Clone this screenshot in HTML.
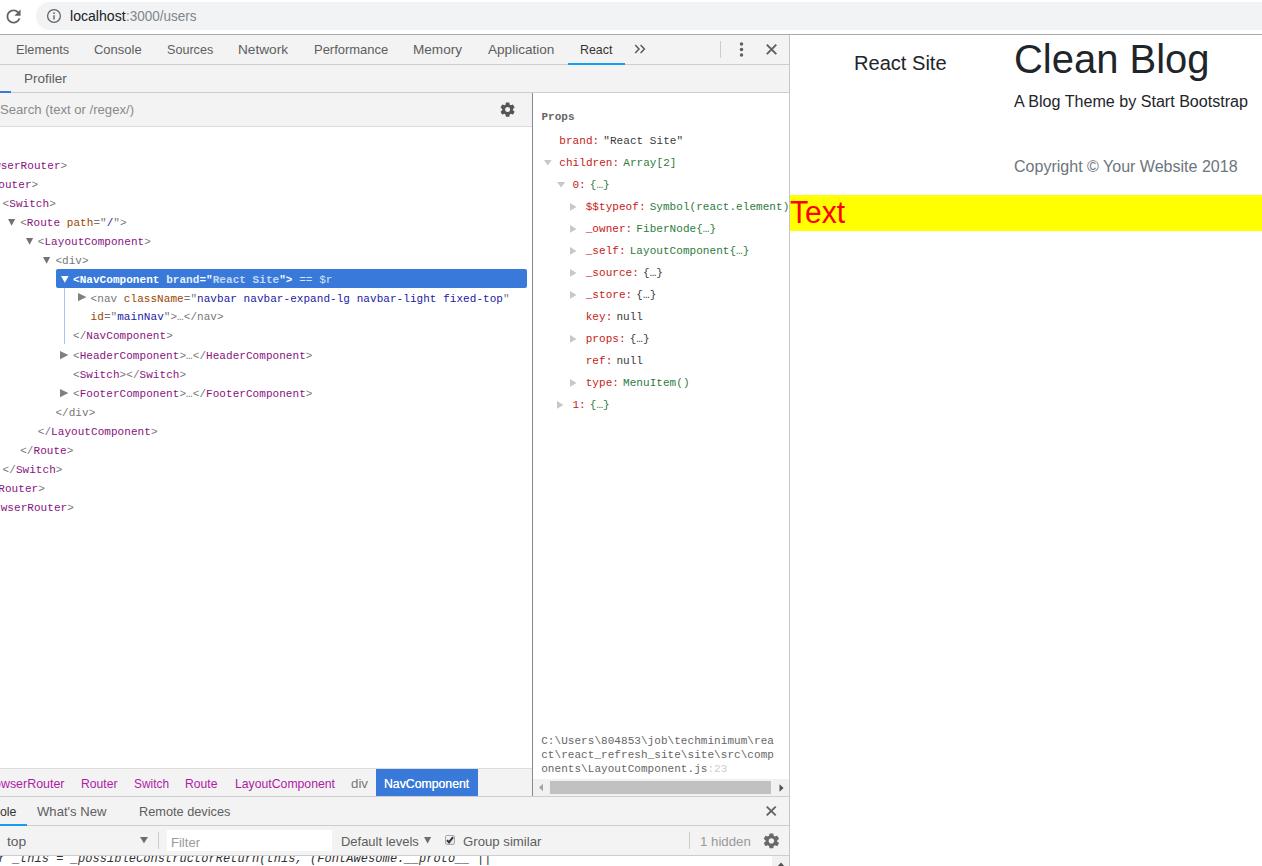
<!DOCTYPE html>
<html><head><meta charset="utf-8">
<style>
*{box-sizing:border-box;margin:0;padding:0}
html,body{width:1262px;height:866px;overflow:hidden;background:#fff;font-family:"Liberation Sans",sans-serif;}
#root{position:relative;width:1262px;height:866px;overflow:hidden}
.a{position:absolute}
.t{position:absolute;white-space:pre;line-height:1;transform-origin:0 50%}
.tag{color:#777}.cn{color:#881280}.an{color:#994500}.av{color:#1a1aa6}
.k{color:#c41a16}.g{color:#2d7b3b}.d{color:#3a3a3a}
svg{position:absolute;overflow:visible}
</style></head><body><div id="root">
<!-- URL bar -->
<div class="a" style="left:36px;top:2px;width:1300px;height:28px;border-radius:14px;background:#f1f3f4"></div>
<div class="a" style="left:0;top:34px;width:1262px;height:1px;background:#a9a9a9"></div>
<svg style="left:3.4px;top:5.9px" width="21.2" height="21" viewBox="0 0 24 24"><path fill="#5f6368" d="M17.65 6.35C16.2 4.9 14.21 4 12 4c-4.42 0-7.99 3.58-7.99 8s3.57 8 7.99 8c3.73 0 6.84-2.55 7.73-6h-2.08c-.82 2.33-3.04 4-5.65 4-3.31 0-6-2.69-6-6s2.69-6 6-6c1.66 0 3.14.69 4.22 1.78L13 11h7V4l-2.35 2.35z"/></svg>
<svg style="left:46px;top:8px" width="16" height="16" viewBox="0 0 16 16"><circle cx="8" cy="8" r="6.4" fill="none" stroke="#5f6368" stroke-width="1.3"/><rect x="7.3" y="7.2" width="1.4" height="4.3" fill="#5f6368"/><circle cx="8" cy="5.1" r="0.95" fill="#5f6368"/></svg>
<!-- devtools chrome -->
<div class="a" style="left:0;top:35px;width:789px;height:92px;background:#f3f3f3"></div>
<div class="a" style="left:0;top:64px;width:789px;height:1px;background:#cdcdcd"></div>
<div class="a" style="left:0;top:92px;width:789px;height:1px;background:#cdcdcd"></div>
<div class="a" style="left:0;top:126px;width:532px;height:1px;background:#dcdcdc"></div>
<div class="a" style="left:0;top:90.5px;width:11px;height:2px;background:#3879d9"></div>
<div class="a" style="left:568px;top:63px;width:57px;height:2px;background:#1a9cf0"></div>
<!-- chevrons, sep, dots, close -->
<svg style="left:634px;top:44px" width="12" height="10" viewBox="0 0 12 10"><path d="M1.2 1 L5 5 L1.2 9 M6.6 1 L10.4 5 L6.6 9" fill="none" stroke="#5a5a5a" stroke-width="1.5"/></svg>
<div class="a" style="left:720px;top:41px;width:1px;height:17px;background:#ccc"></div>
<svg style="left:739px;top:42px" width="5" height="15" viewBox="0 0 5 15"><circle cx="2.5" cy="2.1" r="1.75" fill="#606060"/><circle cx="2.5" cy="7.6" r="1.75" fill="#606060"/><circle cx="2.5" cy="13.1" r="1.75" fill="#606060"/></svg>
<svg style="left:766px;top:44px" width="11" height="11" viewBox="0 0 11 11"><path d="M0.8 0.6 L10.3 10.1 M10.3 0.6 L0.8 10.1" stroke="#626262" stroke-width="2" fill="none"/></svg>
<!-- gear 1 -->
<svg style="left:498.9px;top:100.9px" width="17.2" height="17.2" viewBox="0 0 24 24"><path fill="#555" d="M19.43 12.98c.04-.32.07-.64.07-.98s-.03-.66-.07-.98l2.11-1.65c.19-.15.24-.42.12-.64l-2-3.46c-.12-.22-.39-.3-.61-.22l-2.49 1c-.52-.4-1.08-.73-1.69-.98l-.38-2.65C14.46 2.18 14.25 2 14 2h-4c-.25 0-.46.18-.49.42l-.38 2.65c-.61.25-1.17.59-1.69.98l-2.49-1c-.23-.09-.49 0-.61.22l-2 3.46c-.13.22-.07.49.12.64l2.11 1.65c-.04.32-.07.65-.07.98s.03.66.07.98l-2.11 1.65c-.19.15-.24.42-.12.64l2 3.46c.12.22.39.3.61.22l2.49-1c.52.4 1.08.73 1.69.98l.38 2.65c.03.24.24.42.49.42h4c.25 0 .46-.18.49-.42l.38-2.65c.61-.25 1.17-.59 1.69-.98l2.49 1c.23.09.49 0 .61-.22l2-3.46c.12-.22.07-.49-.12-.64l-2.11-1.65zM12 15.5c-1.93 0-3.5-1.57-3.5-3.5s1.57-3.5 3.5-3.5 3.5 1.57 3.5 3.5-1.57 3.5-3.5 3.5z"/></svg>
<!-- tree area -->
<div class="a" style="left:56px;top:269px;width:471px;height:19px;border-radius:2px;background:#3879d9"></div>
<div class="a" style="left:64px;top:288px;width:1px;height:56px;background:#a9c3f0"></div>
<svg style="left:8.1px;top:219.1px" width="7.2" height="6.8" viewBox="0 0 7.2 6.8"><path d="M0 0 L7.2 0 L3.60 6.8z" fill="#727272"/></svg>
<svg style="left:25.7px;top:238.1px" width="7.2" height="6.8" viewBox="0 0 7.2 6.8"><path d="M0 0 L7.2 0 L3.60 6.8z" fill="#727272"/></svg>
<svg style="left:43.3px;top:257.1px" width="7.2" height="6.8" viewBox="0 0 7.2 6.8"><path d="M0 0 L7.2 0 L3.60 6.8z" fill="#727272"/></svg>
<svg style="left:60.6px;top:276.0px" width="7.6" height="6.8" viewBox="0 0 7.6 6.8"><path d="M0 0 L7.6 0 L3.80 6.8z" fill="#fff"/></svg>
<svg style="left:77.8px;top:293.4px" width="8.4" height="8.2" viewBox="0 0 8.4 8.2"><path d="M0 0 L8.4 4.10 L0 8.2z" fill="#808080"/></svg>
<svg style="left:60.2px;top:350.6px" width="8.4" height="8.2" viewBox="0 0 8.4 8.2"><path d="M0 0 L8.4 4.10 L0 8.2z" fill="#808080"/></svg>
<svg style="left:60.2px;top:388.6px" width="8.4" height="8.2" viewBox="0 0 8.4 8.2"><path d="M0 0 L8.4 4.10 L0 8.2z" fill="#808080"/></svg>
<svg style="left:544.2px;top:160.2px" width="7.7" height="5.6" viewBox="0 0 7.7 5.6"><path d="M0 0 L7.7 0 L3.85 5.6z" fill="#c8c8c8"/></svg>
<svg style="left:557.4px;top:182.3px" width="8.2" height="5.6" viewBox="0 0 8.2 5.6"><path d="M0 0 L8.2 0 L4.10 5.6z" fill="#c8c8c8"/></svg>
<svg style="left:570.1px;top:203.0px" width="6.6" height="7.8" viewBox="0 0 6.6 7.8"><path d="M0 0 L6.6 3.90 L0 7.8z" fill="#c8c8c8"/></svg>
<svg style="left:570.1px;top:225.0px" width="6.6" height="7.8" viewBox="0 0 6.6 7.8"><path d="M0 0 L6.6 3.90 L0 7.8z" fill="#c8c8c8"/></svg>
<svg style="left:570.1px;top:247.0px" width="6.6" height="7.8" viewBox="0 0 6.6 7.8"><path d="M0 0 L6.6 3.90 L0 7.8z" fill="#c8c8c8"/></svg>
<svg style="left:570.1px;top:269.0px" width="6.6" height="7.8" viewBox="0 0 6.6 7.8"><path d="M0 0 L6.6 3.90 L0 7.8z" fill="#c8c8c8"/></svg>
<svg style="left:570.1px;top:291.0px" width="6.6" height="7.8" viewBox="0 0 6.6 7.8"><path d="M0 0 L6.6 3.90 L0 7.8z" fill="#c8c8c8"/></svg>
<svg style="left:570.1px;top:335.0px" width="6.6" height="7.8" viewBox="0 0 6.6 7.8"><path d="M0 0 L6.6 3.90 L0 7.8z" fill="#c8c8c8"/></svg>
<svg style="left:570.1px;top:379.0px" width="6.6" height="7.8" viewBox="0 0 6.6 7.8"><path d="M0 0 L6.6 3.90 L0 7.8z" fill="#c8c8c8"/></svg>
<svg style="left:557.0px;top:401.0px" width="6.5" height="7.8" viewBox="0 0 6.5 7.8"><path d="M0 0 L6.5 3.90 L0 7.8z" fill="#c8c8c8"/></svg>
<!-- props panel -->
<div class="a" style="left:533px;top:93px;width:256px;height:40px;background:#fff"></div>
<div class="a" style="left:532px;top:93px;width:1px;height:704px;background:#8a8a8a"></div>
<div class="a" style="left:533px;top:779px;width:256px;height:17px;background:#f1f1f1"></div>
<div class="a" style="left:550px;top:781px;width:221px;height:13px;background:#c1c1c1"></div>
<svg style="left:537.9px;top:783px" width="6" height="9" viewBox="0 0 6 9"><path d="M5 0.8 L1 4.5 L5 8.2z" fill="#a3a3a3"/></svg>
<svg style="left:778.5px;top:783.5px" width="5" height="8" viewBox="0 0 5 8"><path d="M0.5 0.3 L4.5 4 L0.5 7.7z" fill="#505050"/></svg>
<!-- breadcrumb -->
<div class="a" style="left:0;top:768px;width:532px;height:29px;background:#f3f3f3;border-top:1px solid #dcdcdc"></div>
<div class="a" style="left:376px;top:769px;width:102px;height:28px;background:#3879d9"></div>
<!-- drawer -->
<div class="a" style="left:0;top:796px;width:789px;height:60px;background:#f3f3f3;border-top:1px solid #cdcdcd;z-index:2"></div>
<div class="a" style="left:0;top:825px;width:789px;height:1px;background:#cdcdcd;z-index:2"></div>
<div class="a" style="left:0;top:855px;width:789px;height:1px;background:#cdcdcd;z-index:2"></div>
<div class="a" style="left:0;top:824px;width:27px;height:2px;background:#1a9cf0;z-index:2"></div>
<svg style="left:766.2px;top:805.9px;z-index:3" width="10.4" height="10.2" preserveAspectRatio="none" viewBox="0 0 11 11"><path d="M0.8 0.6 L10.3 10.1 M10.3 0.6 L0.8 10.1" stroke="#626262" stroke-width="2" fill="none"/></svg>
<svg style="left:140px;top:837.3px;z-index:3" width="8" height="6.2" viewBox="0 0 8 6.2"><path d="M0 0 L8 0 L4 6.2z" fill="#6e6e6e"/></svg>
<div class="a" style="left:158px;top:832px;width:1px;height:17px;background:#ccc;z-index:3"></div>
<div class="a" style="left:167px;top:830px;width:165px;height:21px;background:#fff;z-index:3"></div>
<svg style="left:424.2px;top:837.3px;z-index:3" width="7.2" height="6.4" viewBox="0 0 7.2 6.4"><path d="M0 0 L7.2 0 L3.6 6.4z" fill="#6e6e6e"/></svg>
<div class="a" style="left:444.5px;top:834.5px;width:10.5px;height:10.5px;border:1px solid #a6a6a6;border-radius:2px;background:linear-gradient(#f6f6f6,#e2e2e2);z-index:3"></div>
<svg style="left:446px;top:836px;z-index:4" width="8" height="8" viewBox="0 0 8 8"><path d="M1 4.2 L3 6.4 L7 1.2" fill="none" stroke="#333" stroke-width="2"/></svg>
<div class="a" style="left:689px;top:832px;width:1px;height:17px;background:#ccc;z-index:3"></div>
<svg style="left:762.2px;top:832px;z-index:3" width="18.8" height="17.8" preserveAspectRatio="none" viewBox="0 0 24 24"><path fill="#6a6a6a" d="M19.43 12.98c.04-.32.07-.64.07-.98s-.03-.66-.07-.98l2.11-1.65c.19-.15.24-.42.12-.64l-2-3.46c-.12-.22-.39-.3-.61-.22l-2.49 1c-.52-.4-1.08-.73-1.69-.98l-.38-2.65C14.46 2.18 14.25 2 14 2h-4c-.25 0-.46.18-.49.42l-.38 2.65c-.61.25-1.17.59-1.69.98l-2.49-1c-.23-.09-.49 0-.61.22l-2 3.46c-.13.22-.07.49.12.64l2.11 1.65c-.04.32-.07.65-.07.98s.03.66.07.98l-2.11 1.65c-.19.15-.24.42-.12.64l2 3.46c.12.22.39.3.61.22l2.49-1c.52.4 1.08.73 1.69.98l.38 2.65c.03.24.24.42.49.42h4c.25 0 .46-.18.49-.42l.38-2.65c.61-.25 1.17-.59 1.69-.98l2.49 1c.23.09.49 0 .61-.22l2-3.46c.12-.22.07-.49-.12-.64l-2.11-1.65zM12 15.5c-1.93 0-3.5-1.57-3.5-3.5s1.57-3.5 3.5-3.5 3.5 1.57 3.5 3.5-1.57 3.5-3.5 3.5z"/></svg>
<!-- console v-scrollbar -->
<div class="a" style="left:772px;top:856px;width:17px;height:10px;background:#f1f1f1"></div>
<svg style="left:776.6px;top:861.6px" width="8" height="5" viewBox="0 0 8 5"><path d="M0 5 L4 0.5 L8 5z" fill="#505050"/></svg>
<!-- devtools right border -->
<div class="a" style="left:789px;top:35px;width:1px;height:831px;background:#c6c6cc;z-index:5"></div>
<!-- page -->
<div class="a" style="left:790px;top:195px;width:472px;height:36px;background:#ffff00"></div>
<div class="t" style="left:70.00px;top:9.00px;font-size:14px;color:#202124;transform:scaleX(1.0061);">localhost</div>
<div class="t" style="left:125.60px;top:9.00px;font-size:14px;color:#80868b;transform:scaleX(0.9649);">:3000/users</div>
<div class="t" style="left:16.00px;top:43.30px;font-size:13px;color:#5e5e5e;transform:scaleX(0.9815);">Elements</div>
<div class="t" style="left:94.20px;top:43.30px;font-size:13px;color:#5e5e5e;transform:scaleX(0.9978);">Console</div>
<div class="t" style="left:166.80px;top:43.30px;font-size:13px;color:#5e5e5e;transform:scaleX(0.9685);">Sources</div>
<div class="t" style="left:238.40px;top:43.30px;font-size:13px;color:#5e5e5e;transform:scaleX(1.0485);">Network</div>
<div class="t" style="left:314.40px;top:43.30px;font-size:13px;color:#5e5e5e;transform:scaleX(0.9970);">Performance</div>
<div class="t" style="left:413.20px;top:43.30px;font-size:13px;color:#5e5e5e;transform:scaleX(1.0436);">Memory</div>
<div class="t" style="left:488.00px;top:43.30px;font-size:13px;color:#5e5e5e;transform:scaleX(1.0439);">Application</div>
<div class="t" style="left:580.20px;top:43.30px;font-size:13px;color:#333;transform:scaleX(0.9538);">React</div>
<div class="t" style="left:24.00px;top:72.00px;font-size:13px;color:#5e5e5e;transform:scaleX(1.0392);">Profiler</div>
<div class="t" style="left:-0.50px;top:102.60px;font-size:13px;color:#8a8a8a;transform:scaleX(1.0079);">Search (text or /regex/)</div>
<div class="t" style="left:854.20px;top:52.60px;font-size:20px;color:#212529;transform:scaleX(1.0036);">React Site</div>
<div class="t" style="left:1013.50px;top:38.60px;font-size:40px;color:#212529;transform:scaleX(0.9990);">Clean Blog</div>
<div class="t" style="left:1014.00px;top:94.30px;font-size:16px;color:#212529;transform:scaleX(1.0055);">A Blog Theme by Start Bootstrap</div>
<div class="t" style="left:1014.00px;top:159.00px;font-size:16px;color:#6c757d;transform:scaleX(1.0018);">Copyright © Your Website 2018</div>
<div class="t" style="left:790.30px;top:197.00px;font-size:31px;color:#ff0000;transform:scaleX(0.9691);">Text</div>
<div class="t" style="left:-6.50px;top:776.60px;font-size:13px;color:#b01aa8;transform:scaleX(0.9565);">owserRouter</div>
<div class="t" style="left:80.60px;top:776.60px;font-size:13px;color:#b01aa8;transform:scaleX(0.9377);">Router</div>
<div class="t" style="left:133.60px;top:776.60px;font-size:13px;color:#b01aa8;transform:scaleX(0.9139);">Switch</div>
<div class="t" style="left:185.40px;top:776.60px;font-size:13px;color:#b01aa8;transform:scaleX(0.9336);">Route</div>
<div class="t" style="left:234.60px;top:776.60px;font-size:13px;color:#b01aa8;transform:scaleX(0.9412);">LayoutComponent</div>
<div class="t" style="left:351.00px;top:776.60px;font-size:13px;color:#777;transform:scaleX(1.0226);">div</div>
<div class="t" style="left:384.40px;top:776.60px;font-size:13px;color:#fff;transform:scaleX(0.9432);text-shadow:0 0 0.4px #fff;">NavComponent</div>
<div class="t" style="left:-0.50px;top:804.70px;font-size:13px;color:#333;transform:scaleX(0.9505);z-index:4;">ole</div>
<div class="t" style="left:37.40px;top:804.70px;font-size:13px;color:#5e5e5e;transform:scaleX(1.0065);z-index:4;">What's New</div>
<div class="t" style="left:138.80px;top:804.70px;font-size:13px;color:#5e5e5e;transform:scaleX(0.9805);z-index:4;">Remote devices</div>
<div class="t" style="left:7.20px;top:834.80px;font-size:13px;color:#5e5e5e;transform:scaleX(1.0621);z-index:4;">top</div>
<div class="t" style="left:171.00px;top:836.00px;font-size:13px;color:#9a9a9a;transform:scaleX(1.0038);z-index:4;">Filter</div>
<div class="t" style="left:340.80px;top:834.60px;font-size:13px;color:#5e5e5e;transform:scaleX(0.9968);z-index:4;">Default levels</div>
<div class="t" style="left:463.40px;top:834.60px;font-size:13px;color:#5e5e5e;transform:scaleX(1.0143);z-index:4;">Group similar</div>
<div class="t" style="left:699.60px;top:834.80px;font-size:13px;color:#9a9a9a;transform:scaleX(1.0182);z-index:4;">1 hidden</div>
<div class="t" style="left:-32.60px;top:161.00px;font-size:11px;color:#333;font-family:'Liberation Mono',monospace;letter-spacing:0.05px;"><span style="visibility:hidden">&lt;Bro</span><span class="cn">wserRouter</span><span class="tag">&gt;</span></div>
<div class="t" style="left:-15.00px;top:180.00px;font-size:11px;color:#333;font-family:'Liberation Mono',monospace;letter-spacing:0.05px;"><span style="visibility:hidden">&lt;R</span><span class="cn">outer</span><span class="tag">&gt;</span></div>
<div class="t" style="left:2.60px;top:199.00px;font-size:11px;color:#333;font-family:'Liberation Mono',monospace;letter-spacing:0.05px;"><span class="tag">&lt;</span><span class="cn">Switch</span><span class="tag">&gt;</span></div>
<div class="t" style="left:20.20px;top:218.00px;font-size:11px;color:#333;font-family:'Liberation Mono',monospace;letter-spacing:0.05px;"><span class="tag">&lt;</span><span class="cn">Route</span> <span class="an">path</span><span class="tag">="</span><span class="av">/</span><span class="tag">"&gt;</span></div>
<div class="t" style="left:37.80px;top:237.00px;font-size:11px;color:#333;font-family:'Liberation Mono',monospace;letter-spacing:0.05px;"><span class="tag">&lt;</span><span class="cn">LayoutComponent</span><span class="tag">&gt;</span></div>
<div class="t" style="left:55.40px;top:256.00px;font-size:11px;color:#333;font-family:'Liberation Mono',monospace;letter-spacing:0.05px;"><span class="tag">&lt;div&gt;</span></div>
<div class="t" style="left:73.00px;top:275.00px;font-size:11px;color:#fff;font-family:'Liberation Mono',monospace;letter-spacing:0.05px;font-weight:bold;">&lt;NavComponent <span style="opacity:.88">brand</span>="<span style="opacity:.7">React Site</span>"&gt;<span style="opacity:.8;font-weight:normal"> == $r</span></div>
<div class="t" style="left:90.60px;top:294.00px;font-size:11px;color:#333;font-family:'Liberation Mono',monospace;letter-spacing:0.05px;"><span class="tag">&lt;nav </span><span class="an">className</span><span class="tag">="</span><span class="av">navbar navbar-expand-lg navbar-light fixed-top</span><span class="tag">"</span></div>
<div class="t" style="left:90.60px;top:312.00px;font-size:11px;color:#333;font-family:'Liberation Mono',monospace;letter-spacing:0.05px;"><span class="an">id</span><span class="tag">="</span><span class="av">mainNav</span><span class="tag">"&gt;…&lt;/nav&gt;</span></div>
<div class="t" style="left:73.00px;top:331.00px;font-size:11px;color:#333;font-family:'Liberation Mono',monospace;letter-spacing:0.05px;"><span class="tag">&lt;/</span><span class="cn">NavComponent</span><span class="tag">&gt;</span></div>
<div class="t" style="left:73.00px;top:351.00px;font-size:11px;color:#333;font-family:'Liberation Mono',monospace;letter-spacing:0.05px;"><span class="tag">&lt;</span><span class="cn">HeaderComponent</span><span class="tag">&gt;…&lt;/</span><span class="cn">HeaderComponent</span><span class="tag">&gt;</span></div>
<div class="t" style="left:73.00px;top:370.00px;font-size:11px;color:#333;font-family:'Liberation Mono',monospace;letter-spacing:0.05px;"><span class="tag">&lt;</span><span class="cn">Switch</span><span class="tag">&gt;&lt;/</span><span class="cn">Switch</span><span class="tag">&gt;</span></div>
<div class="t" style="left:73.00px;top:389.00px;font-size:11px;color:#333;font-family:'Liberation Mono',monospace;letter-spacing:0.05px;"><span class="tag">&lt;</span><span class="cn">FooterComponent</span><span class="tag">&gt;…&lt;/</span><span class="cn">FooterComponent</span><span class="tag">&gt;</span></div>
<div class="t" style="left:55.40px;top:408.00px;font-size:11px;color:#333;font-family:'Liberation Mono',monospace;letter-spacing:0.05px;"><span class="tag">&lt;/div&gt;</span></div>
<div class="t" style="left:37.80px;top:427.00px;font-size:11px;color:#333;font-family:'Liberation Mono',monospace;letter-spacing:0.05px;"><span class="tag">&lt;/</span><span class="cn">LayoutComponent</span><span class="tag">&gt;</span></div>
<div class="t" style="left:20.20px;top:446.00px;font-size:11px;color:#333;font-family:'Liberation Mono',monospace;letter-spacing:0.05px;"><span class="tag">&lt;/</span><span class="cn">Route</span><span class="tag">&gt;</span></div>
<div class="t" style="left:2.60px;top:465.00px;font-size:11px;color:#333;font-family:'Liberation Mono',monospace;letter-spacing:0.05px;"><span class="tag">&lt;/</span><span class="cn">Switch</span><span class="tag">&gt;</span></div>
<div class="t" style="left:-15.00px;top:484.00px;font-size:11px;color:#333;font-family:'Liberation Mono',monospace;letter-spacing:0.05px;"><span style="visibility:hidden">&lt;/</span><span class="cn">Router</span><span class="tag">&gt;</span></div>
<div class="t" style="left:-32.60px;top:503.00px;font-size:11px;color:#333;font-family:'Liberation Mono',monospace;letter-spacing:0.05px;"><span style="visibility:hidden">&lt;/Bro</span><span class="cn">wserRouter</span><span class="tag">&gt;</span></div>
<div class="t" style="left:541.40px;top:112.00px;font-size:11px;color:#666;font-family:'Liberation Mono',monospace;letter-spacing:0.05px;font-weight:bold;">Props</div>
<div class="t" style="left:559.30px;top:136.00px;font-size:11px;color:#333;font-family:'Liberation Mono',monospace;letter-spacing:0.05px;"><span class="k">brand:</span></div>
<div class="t" style="left:603.30px;top:136.00px;font-size:11px;color:#333;font-family:'Liberation Mono',monospace;letter-spacing:0.05px;"><span class="d">"React Site"</span></div>
<div class="t" style="left:559.30px;top:158.00px;font-size:11px;color:#333;font-family:'Liberation Mono',monospace;letter-spacing:0.05px;"><span class="k">children:</span></div>
<div class="t" style="left:623.25px;top:158.00px;font-size:11px;color:#333;font-family:'Liberation Mono',monospace;letter-spacing:0.05px;"><span class="g">Array[2]</span></div>
<div class="t" style="left:572.40px;top:180.00px;font-size:11px;color:#333;font-family:'Liberation Mono',monospace;letter-spacing:0.05px;"><span class="k">0:</span></div>
<div class="t" style="left:589.80px;top:180.00px;font-size:11px;color:#333;font-family:'Liberation Mono',monospace;letter-spacing:0.05px;"><span class="g">{…}</span></div>
<div class="t" style="left:585.70px;top:202.00px;font-size:11px;color:#333;font-family:'Liberation Mono',monospace;letter-spacing:0.05px;"><span class="k">$$typeof:</span></div>
<div class="t" style="left:649.65px;top:202.00px;font-size:11px;color:#333;font-family:'Liberation Mono',monospace;letter-spacing:0.05px;"><span class="g">Symbol(react.element)</span></div>
<div class="t" style="left:585.70px;top:224.00px;font-size:11px;color:#333;font-family:'Liberation Mono',monospace;letter-spacing:0.05px;"><span class="k">_owner:</span></div>
<div class="t" style="left:636.35px;top:224.00px;font-size:11px;color:#333;font-family:'Liberation Mono',monospace;letter-spacing:0.05px;"><span class="g">FiberNode{…}</span></div>
<div class="t" style="left:585.70px;top:246.00px;font-size:11px;color:#333;font-family:'Liberation Mono',monospace;letter-spacing:0.05px;"><span class="k">_self:</span></div>
<div class="t" style="left:629.70px;top:246.00px;font-size:11px;color:#333;font-family:'Liberation Mono',monospace;letter-spacing:0.05px;"><span class="g">LayoutComponent{…}</span></div>
<div class="t" style="left:585.70px;top:268.00px;font-size:11px;color:#333;font-family:'Liberation Mono',monospace;letter-spacing:0.05px;"><span class="k">_source:</span></div>
<div class="t" style="left:643.00px;top:268.00px;font-size:11px;color:#333;font-family:'Liberation Mono',monospace;letter-spacing:0.05px;"><span class="d">{…}</span></div>
<div class="t" style="left:585.70px;top:290.00px;font-size:11px;color:#333;font-family:'Liberation Mono',monospace;letter-spacing:0.05px;"><span class="k">_store:</span></div>
<div class="t" style="left:636.35px;top:290.00px;font-size:11px;color:#333;font-family:'Liberation Mono',monospace;letter-spacing:0.05px;"><span class="d">{…}</span></div>
<div class="t" style="left:585.70px;top:312.00px;font-size:11px;color:#333;font-family:'Liberation Mono',monospace;letter-spacing:0.05px;"><span class="k">key:</span></div>
<div class="t" style="left:616.40px;top:312.00px;font-size:11px;color:#333;font-family:'Liberation Mono',monospace;letter-spacing:0.05px;"><span class="d">null</span></div>
<div class="t" style="left:585.70px;top:334.00px;font-size:11px;color:#333;font-family:'Liberation Mono',monospace;letter-spacing:0.05px;"><span class="k">props:</span></div>
<div class="t" style="left:629.70px;top:334.00px;font-size:11px;color:#333;font-family:'Liberation Mono',monospace;letter-spacing:0.05px;"><span class="d">{…}</span></div>
<div class="t" style="left:585.70px;top:356.00px;font-size:11px;color:#333;font-family:'Liberation Mono',monospace;letter-spacing:0.05px;"><span class="k">ref:</span></div>
<div class="t" style="left:616.40px;top:356.00px;font-size:11px;color:#333;font-family:'Liberation Mono',monospace;letter-spacing:0.05px;"><span class="d">null</span></div>
<div class="t" style="left:585.70px;top:378.00px;font-size:11px;color:#333;font-family:'Liberation Mono',monospace;letter-spacing:0.05px;"><span class="k">type:</span></div>
<div class="t" style="left:623.05px;top:378.00px;font-size:11px;color:#333;font-family:'Liberation Mono',monospace;letter-spacing:0.05px;"><span class="g">MenuItem()</span></div>
<div class="t" style="left:572.40px;top:400.00px;font-size:11px;color:#333;font-family:'Liberation Mono',monospace;letter-spacing:0.05px;"><span class="k">1:</span></div>
<div class="t" style="left:589.80px;top:400.00px;font-size:11px;color:#333;font-family:'Liberation Mono',monospace;letter-spacing:0.05px;"><span class="g">{…}</span></div>
<div class="t" style="left:541.20px;top:736.00px;font-size:11px;color:#666;font-family:'Liberation Mono',monospace;letter-spacing:0.05px;">C:\Users\804853\job\techminimum\rea</div>
<div class="t" style="left:541.20px;top:750.00px;font-size:11px;color:#666;font-family:'Liberation Mono',monospace;letter-spacing:0.05px;">ct\react_refresh_site\site\src\comp</div>
<div class="t" style="left:541.20px;top:764.00px;font-size:11px;color:#666;font-family:'Liberation Mono',monospace;letter-spacing:0.05px;">onents\LayoutComponent.js<span style="color:#ccc">:23</span></div>
<div class="t" style="left:-1.70px;top:853.00px;font-size:12px;color:#303030;font-family:'Liberation Mono',monospace;letter-spacing:0.05px;font-style:italic;z-index:1;">r _this = _possibleConstructorReturn(this, (FontAwesome.__proto__ ||</div>
</div></body></html>
